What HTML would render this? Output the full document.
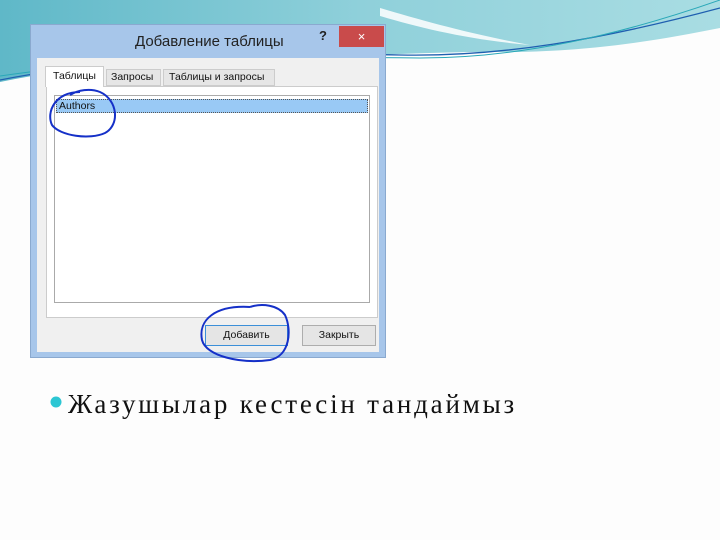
<!DOCTYPE html>
<html><head><meta charset="utf-8"><style>
body{margin:0;width:720px;height:540px;overflow:hidden;background:#fdfdfd;position:relative;font-family:"Liberation Sans","DejaVu Sans",sans-serif}
.a{position:absolute}
.t{font-size:10.5px;color:#111}
</style></head><body>
<svg class="a" style="left:0;top:0" width="720" height="100">
<defs><linearGradient id="g" x1="0" y1="0" x2="1" y2="0"><stop offset="0" stop-color="#5fb8c8"/><stop offset=".5" stop-color="#8fd0da"/><stop offset="1" stop-color="#a9dde3"/></linearGradient></defs>
<path d="M0 0H720V28C660 40 600 50 520 52L470 52C380 54 300 58 200 60C120 62 60 70 0 82Z" fill="url(#g)"/>
<path d="M380 8C420 20 470 34 530 45C470 40 420 28 380 16Z" fill="#fff" opacity=".85"/>
<path d="M0 80C100 60 250 52 400 55C500 57 600 40 720 8" stroke="#1f5fb0" fill="none" stroke-width="1.3"/>
<path d="M0 76C120 58 260 56 420 58C520 58 620 35 720 0" stroke="#2aa8b8" fill="none" stroke-width="1"/>
</svg>
<div class="a" style="left:30px;top:24px;width:356px;height:334px;background:#a7c6ea;border:1px solid #8aa9cf;box-sizing:border-box"></div>
<div class="a" style="left:339px;top:26px;width:45px;height:21px;background:#c94b4b;color:#fff;font-size:13px;text-align:center;line-height:21px">×</div>
<div class="a" style="left:319px;top:28px;font-size:13px;font-weight:bold;color:#222">?</div>
<div class="a" style="left:135px;top:33px;font-size:15px;color:#222">Добавление таблицы</div>
<div class="a" style="left:37px;top:58px;width:342px;height:294px;background:#f0f0f0"></div>
<div class="a" style="left:46px;top:86px;width:332px;height:232px;background:#fff;border:1px solid #ccc;box-sizing:border-box"></div>
<div class="a t" style="left:45px;top:66px;width:59px;height:21px;background:#fff;border:1px solid #ccc;border-bottom:none;box-sizing:border-box;padding:3px 0 0 7px">Таблицы</div>
<div class="a t" style="left:106px;top:69px;width:55px;height:17px;background:#e6e6e6;border:1px solid #ccc;box-sizing:border-box;padding:1px 0 0 4px">Запросы</div>
<div class="a t" style="left:163px;top:69px;width:112px;height:17px;background:#e6e6e6;border:1px solid #ccc;box-sizing:border-box;padding:1px 0 0 5px">Таблицы и запросы</div>
<div class="a" style="left:54px;top:95px;width:316px;height:208px;background:#fff;border:1px solid #aaa;box-sizing:border-box"></div>
<div class="a t" style="left:56px;top:99px;width:312px;height:14px;background:#99c9f5;border:1px dotted #555;box-sizing:border-box;padding:0 0 0 2px;line-height:12px">Authors</div>
<div class="a t" style="left:205px;top:325px;width:83px;height:21px;background:#e5e5e5;border:1px solid #3c8fd8;box-sizing:border-box;text-align:center;line-height:19px">Добавить</div>
<div class="a t" style="left:302px;top:325px;width:74px;height:21px;background:#e5e5e5;border:1px solid #adadad;box-sizing:border-box;text-align:center;line-height:19px">Закрыть</div>
<svg class="a" style="left:0;top:0" width="720" height="540">
<path d="M80 92C55 92 46 112 52 125C60 136 90 140 105 133C120 125 118 100 100 92C90 88 78 90 70 95" stroke="#1530c8" stroke-width="2" fill="none"/>
<path d="M250 307C215 305 198 320 202 340C206 356 240 364 270 360C290 356 292 330 285 315C278 305 262 303 250 307" stroke="#1530c8" stroke-width="2" fill="none"/>
<circle cx="56" cy="402" r="5.5" fill="#2cc6d3"/>
</svg>
<div class="a" style="left:68px;top:389px;font-family:'Liberation Serif',serif;font-size:27px;color:#111;letter-spacing:2.8px;white-space:nowrap">Жазушылар кестесін тандаймыз</div>
</body></html>
